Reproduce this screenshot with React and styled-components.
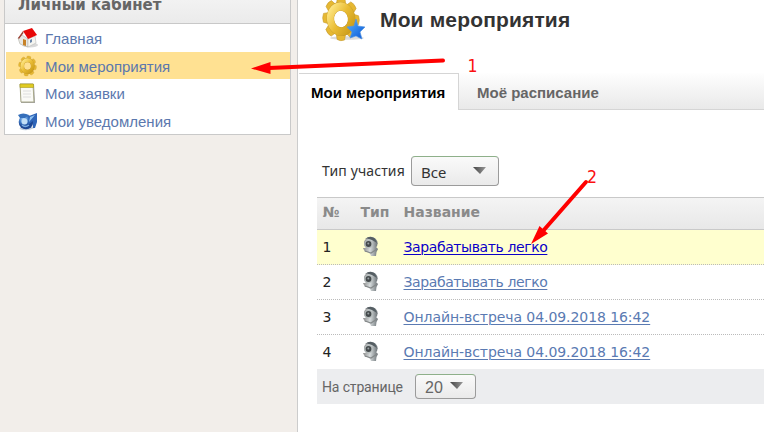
import React from "react";
import styled, { createGlobalStyle } from "styled-components";

const Global = createGlobalStyle`
  * { box-sizing: border-box; }
  html, body { margin: 0; overflow: hidden; }
  body { background: #f2eeea; font-family: "Liberation Sans", Arial, sans-serif; }
`;

const Page = styled.div`
  position: relative;
  display: flex;
  width: 764px;
  height: 432px;
  overflow: hidden;
`;

const Sidebar = styled.aside`
  width: 287px;
  height: 135px;
  margin-left: 4px;
  flex: none;
  background: #fff;
  border: 1px solid #c9c9c9;
  border-top: 0;
`;

const SidebarTitle = styled.div`
  height: 24px;
  padding-left: 13px;
  border-bottom: 1px solid #c8c8c8;
  background: linear-gradient(#f2f2f2, #ebebeb);
  color: #666;
  font: bold 15px/10px "DejaVu Sans", Verdana, sans-serif;
  white-space: nowrap;
`;

const Menu = styled.nav`
  display: grid;
  grid-template-rows: 28px 27px 28px 27px;
  padding-left: 1px;
`;

const MenuItem = styled.a`
  display: flex;
  align-items: center;
  gap: 7px;
  padding: ${(p) => (p.$low ? "1px" : "0")} 0 0 11px;
  color: #5b78ae;
  font-size: 15px;
  background: ${(p) => (p.$active ? "#ffe192" : "transparent")};
  svg { flex: none; }
`;

const Main = styled.main`
  flex: 1;
  margin-left: 6px;
  border-left: 1px solid #ccc;
  background: #fff;
  min-width: 0;
`;

const Heading = styled.header`
  display: flex;
  height: 73px;
  padding-left: 23px;
  svg { flex: none; }
`;

const Title = styled.h1`
  margin: 8px 0 0 14px;
  color: #333;
  font-size: 21px;
  line-height: 24px;
  letter-spacing: 0.15px;
  white-space: nowrap;
`;

const Tabs = styled.div`
  display: flex;
  height: 37px;
  padding-left: 1px;
`;

const Tab = styled.div`
  flex: ${(p) => (p.$active ? "none" : "1")};
  width: ${(p) => (p.$active ? "160px" : "auto")};
  padding-left: ${(p) => (p.$active ? "12px" : "18px")};
  padding-top: ${(p) => (p.$active ? "0" : "1px")};
  border-top: ${(p) => (p.$active ? "1px solid #d5d5d5" : "0")};
  border-right: ${(p) => (p.$active ? "1px solid #d5d5d5" : "0")};
  border-bottom: ${(p) => (p.$active ? "0" : "1px solid #d5d5d5")};
  background: ${(p) => (p.$active ? "#fff" : "linear-gradient(#fefefe, #e9e9e9)")};
  color: ${(p) => (p.$active ? "#000" : "#666")};
  font-weight: bold;
  font-size: 15px;
  line-height: 38px;
  white-space: nowrap;
`;

const Filter = styled.div`
  display: flex;
  height: 87px;
  padding: 46px 0 0 24px;
`;

const FilterLabel = styled.span`
  width: 89px;
  color: #333;
  font: 14px/30px "Noto Sans", sans-serif;
  letter-spacing: 0.12px;
  white-space: nowrap;
`;

const Select = styled.div`
  display: flex;
  align-items: center;
  justify-content: space-between;
  width: ${(p) => p.$width}px;
  height: ${(p) => p.$height}px;
  padding: 2px 12px 0 9px;
  border: 1px solid #9b9b9b;
  border-top-color: #8eb08a;
  border-radius: 4px;
  background: linear-gradient(#fafafa, #eaeaea);
  color: ${(p) => p.$color};
  font: ${(p) => p.$font};
  svg { margin-top: -3px; }
`;

const Table = styled.section`
  margin-left: 19px;
  font-family: "DejaVu Sans", Verdana, sans-serif;
  font-size: 14px;
`;

const Row = styled.div`
  display: grid;
  grid-template-columns: 38px 43px 1fr;
  align-items: center;
  height: ${(p) => (p.$last ? 34 : 35)}px;
  padding-left: 5.5px;
  color: #222;
  border-bottom: ${(p) => (p.$last ? "0" : "1px dotted #bbb")};
  background: ${(p) => (p.$active ? "#ffffcf" : "#fff")};
`;

const HeadRow = styled(Row)`
  height: 33px;
  padding-bottom: 3px;
  border-top: 1px solid #c9c9c9;
  border-bottom: 1px solid #c9c9c9;
  background: linear-gradient(#f4f4f4, #e8e8e8);
  color: #8a8a8a;
  font-weight: bold;
`;

const Cell = styled.span`
  white-space: nowrap;
`;

const Link = styled.a`
  justify-self: start;
  color: ${(p) => (p.$active ? "#0b00c8" : "#5a7ab2")};
  text-decoration: underline;
  text-decoration-thickness: 1px;
  text-underline-offset: 2px;
  letter-spacing: ${(p) => p.$spacing || 0}px;
  white-space: nowrap;
`;

const Footer = styled.footer`
  display: flex;
  align-items: center;
  height: 35px;
  padding-left: 5px;
  background: #ecedef;
`;

const FooterLabel = styled.span`
  width: 93px;
  color: #666;
  font: 14px "Roboto", sans-serif;
  letter-spacing: -0.15px;
  white-space: nowrap;
`;

const Arrows = styled.svg`
  position: absolute;
  inset: 0;
  pointer-events: none;
`;

const Mark = styled.span`
  position: absolute;
  left: ${(p) => p.$x}px;
  top: ${(p) => p.$y}px;
  color: #fb1010;
  font: 17.5px/20px "DejaVu Sans Condensed", "DejaVu Sans", sans-serif;
`;

const HouseIcon = () => (
  <svg width="21" height="22" viewBox="0 0 21 22">
    <ellipse cx="13" cy="18" rx="8" ry="2.5" fill="#d9d9d9" />
    <path d="M1 11 5 8 11 12 11 20 3 17Z" fill="#e8e8e4" stroke="#b0b0a8" strokeWidth=".6" />
    <path d="M11 12 18 9 19 16 11 20Z" fill="#f5f5f0" stroke="#bbb" strokeWidth=".6" />
    <path d="M6 4 15 1 20 8 11 12Z" fill="#e80808" />
    <path d="M6 4 1 11 2 12 6.500 6Z" fill="#9d4437" />
    <path d="M6 12 9 13 9 19 6 18Z" fill="#c78228" />
    <path d="M13 13 15 12 15 15 13 16Z" fill="#6a86aa" />
  </svg>
);

const teeth = [10, 55, 100, 145, 190, 235, 280, 325];
const GearShape = ({ id }) => (
  <g>
    <defs>
      <linearGradient id={id} x1="0" y1="0" x2="1" y2="1">
        <stop offset="0" stopColor="#ffe98a" />
        <stop offset=".5" stopColor="#e9bc34" />
        <stop offset="1" stopColor="#c99a18" />
      </linearGradient>
    </defs>
    {teeth.map((a) => (
      <path key={a} d="M-6 -13 -4.500 -21 Q0 -23 4.500 -21 L6 -13Z" transform={`rotate(${a})`} fill="#e6b832" stroke="#c2962a" strokeWidth=".6" />
    ))}
    <circle r="12.800" fill="none" stroke="#c2962a" strokeWidth="9" />
    <circle r="12.800" fill="none" stroke={`url(#${id})`} strokeWidth="8.300" />
  </g>
);

const SmallGear = () => (
  <svg width="21" height="22" viewBox="0 0 21 22">
    <g transform="translate(10.500 11) scale(.41 .46)"><GearShape id="small-gold" /></g>
  </svg>
);

const NoteIcon = () => (
  <svg width="21" height="22" viewBox="0 0 21 22">
    <path d="M3 2H17L18 21H4Z" fill="#a0a0a0" />
    <path d="M3 2H16L17 20H4Z" fill="#fafaf6" stroke="#a8a88a" />
    <path d="M3 2H16.5V5.500H3Z" fill="#e0cb22" stroke="#a89c20" strokeWidth=".6" />
    <path d="M6 9H14M6 12H14M6 15H14" stroke="#dedede" />
  </svg>
);

const NoticeIcon = () => (
  <svg width="21" height="22" viewBox="0 0 21 22">
    <defs>
      <radialGradient id="globe" cx=".35" cy=".3"><stop stopColor="#b9ddff" /><stop offset=".55" stopColor="#4582cc" /><stop offset="1" stopColor="#1d4794" /></radialGradient>
    </defs>
    <path d="M3 18Q9 21 17 17" fill="none" stroke="#c3cedb" strokeWidth="2" />
    <circle cx="9" cy="12" r="7.3" fill="url(#globe)" />
    <path d="M1 5Q6 2 12 5L8 8 3 8Z" fill="#356fba" />
    <circle cx="7.500" cy="11.500" r="3" fill="#c1def6" />
    <path d="M5 15Q8 18 12 15" fill="none" stroke="#79abe0" strokeWidth="1.500" />
    <path d="M12 6 20 3 20 12 18 18 16 18 16 11 11 15Z" fill="#2e65b8" />
    <path d="M13 7 18 5 12 12Z" fill="#8ec2f2" />
  </svg>
);

const StarGear = () => (
  <svg width="45" height="45" viewBox="0 0 45 45">
    <defs>
      <linearGradient id="star" x1="0" y1="0" x2="1" y2="1"><stop stopColor="#58b5ff" /><stop offset="1" stopColor="#0753d5" /></linearGradient>
    </defs>
    <ellipse cx="26" cy="38" rx="17" ry="1.800" fill="#dcdcdc" />
    <g transform="translate(20 19) rotate(-8) scale(.83 .99)"><GearShape id="large-gold" /></g>
    <path d="M35 19 37 26 44 27 39 32 41 39 35 36 29 38 31 32 26 27 33 26Z" fill="url(#star)" stroke="#5394df" strokeWidth=".7" />
  </svg>
);

const Camera = () => (
  <svg width="20" height="22" viewBox="0 0 20 22">
    <defs>
      <linearGradient id="metal"><stop stopColor="#888" /><stop offset=".45" stopColor="#d7dcdd" /><stop offset="1" stopColor="#6b7276" /></linearGradient>
    </defs>
    <path d="M2 12 4 16 8 16 10 20 15 20 15.500 16 17 13 15 11 8 12Z" fill="url(#metal)" />
    <path d="M4 15 10 17 16 13" fill="none" stroke="#85898a" strokeWidth="1.2" />
    <ellipse cx="9.800" cy="7.300" rx="6.800" ry="6.500" fill="url(#metal)" />
    <path d="M4 3Q9 -1 14 2.500L16 7 11 4 6 2.500Z" fill="#555e63" />
    <circle cx="7.500" cy="8" r="4.300" fill="#b5bcbc" />
    <circle cx="7.500" cy="8" r="2.900" fill="#44494b" />
    <circle cx="7.300" cy="7.600" r="1" fill="#98a0a2" />
  </svg>
);

const Down = () => (
  <svg width="13" height="8" viewBox="0 0 13 8">
    <defs><linearGradient id="down"><stop stopColor="#444" /><stop offset="1" stopColor="#999" /></linearGradient></defs>
    <path d="M0 0H13L7 7Z" fill="url(#down)" />
  </svg>
);

const rows = [
  { title: "Зарабатывать легко", active: true, spacing: -0.4 },
  { title: "Зарабатывать легко", spacing: -0.4 },
  { title: "Онлайн-встреча 04.09.2018 16:42", spacing: -0.07 },
  { title: "Онлайн-встреча 04.09.2018 16:42", spacing: -0.07 },
];

export default function App() {
  return (
    <>
      <Global />
      <Page>
        <Sidebar>
          <SidebarTitle>Личный кабинет</SidebarTitle>
          <Menu>
            <MenuItem><HouseIcon />Главная</MenuItem>
            <MenuItem $active $low><SmallGear />Мои мероприятия</MenuItem>
            <MenuItem><NoteIcon />Мои заявки</MenuItem>
            <MenuItem $low><NoticeIcon />Мои уведомления</MenuItem>
          </Menu>
        </Sidebar>
        <Main>
          <Heading><StarGear /><Title>Мои мероприятия</Title></Heading>
          <Tabs>
            <Tab $active>Мои мероприятия</Tab>
            <Tab>Моё расписание</Tab>
          </Tabs>
          <Filter>
            <FilterLabel>Тип участия</FilterLabel>
            <Select $width={88} $height={30} $color="#333" $font={'15px "Noto Sans", sans-serif'}>Все<Down /></Select>
          </Filter>
          <Table>
            <HeadRow><Cell>№</Cell><Cell>Тип</Cell><Cell>Название</Cell></HeadRow>
            {rows.map((r, i) => (
              <Row key={i} $active={r.active} $last={i === rows.length - 1}>
                <Cell>{i + 1}</Cell><Camera /><Link $active={r.active} $spacing={r.spacing}>{r.title}</Link>
              </Row>
            ))}
            <Footer>
              <FooterLabel>На странице</FooterLabel>
              <Select $width={61} $height={25} $color="#666" $font={'16px "Liberation Sans", sans-serif'}>20<Down /></Select>
            </Footer>
          </Table>
        </Main>
        <Arrows width="764" height="432">
          <g fill="#f00" stroke="#f00" strokeLinecap="round">
            <path d="M443 60.5 269 68" strokeWidth="4" />
            <path d="M251 68.500 270.500 62V74Z" stroke="none" />
            <path d="M586 182 543 231" strokeWidth="4" />
            <path d="M531 244 539.500 226 548 233.500Z" stroke="none" />
          </g>
        </Arrows>
        <Mark $x={467.5} $y={56}>1</Mark>
        <Mark $x={587} $y={167}>2</Mark>
      </Page>
    </>
  );
}
